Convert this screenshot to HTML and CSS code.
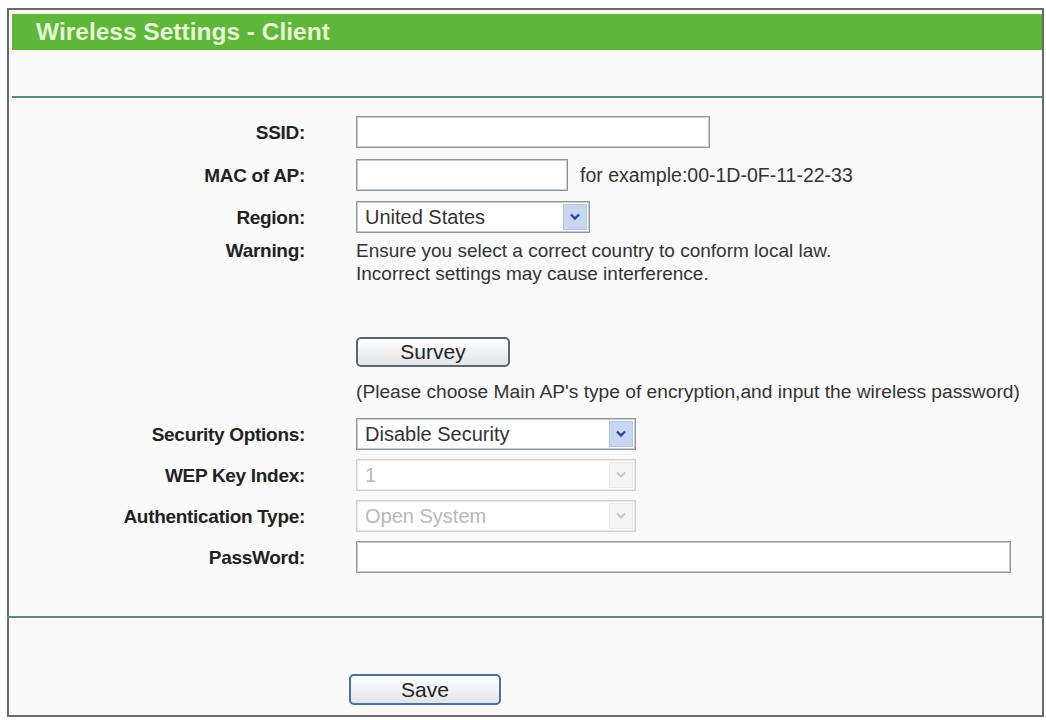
FILE: index.html
```html
<!DOCTYPE html>
<html lang="en">
<head>
<meta charset="utf-8">
<title>Wireless Settings - Client</title>
<link rel="stylesheet" href="styles.css">
</head>
<body>
<div class="frame">
  <div class="header">Wireless Settings - Client</div>
  <div class="rule"></div>
  <form class="form">
    <div class="row r-ssid">
      <label class="lbl">SSID:</label>
      <div class="field"><input class="input w-ssid" type="text"></div>
    </div>
    <div class="row r-mac">
      <label class="lbl">MAC of AP:</label>
      <div class="field"><input class="input w-mac" type="text"><span class="hint">for example:00-1D-0F-11-22-33</span></div>
    </div>
    <div class="row r-region">
      <label class="lbl">Region:</label>
      <div class="field">
        <div class="select w-region">
          <span class="val">United States</span>
          <span class="arrow"><svg width="12" height="8" viewBox="0 0 12 8"><path d="M2 1.5 L6 5.5 L10 1.5" fill="none" stroke="#2b4a8c" stroke-width="2.4"/></svg></span>
        </div>
      </div>
    </div>
    <div class="row r-warning">
      <label class="lbl">Warning:</label>
      <div class="field text">Ensure you select a correct country to conform local law.<br>Incorrect settings may cause interference.</div>
    </div>
    <div class="row r-survey">
      <span class="lbl"></span>
      <div class="field"><button type="button" class="btn btn-survey">Survey</button></div>
    </div>
    <div class="row r-note">
      <span class="lbl"></span>
      <div class="field text">(Please choose Main AP's type of encryption,and input the wireless password)</div>
    </div>
    <div class="row r-sec">
      <label class="lbl">Security Options:</label>
      <div class="field">
        <div class="select w-sec">
          <span class="val">Disable Security</span>
          <span class="arrow"><svg width="12" height="8" viewBox="0 0 12 8"><path d="M2 1.5 L6 5.5 L10 1.5" fill="none" stroke="#2b4a8c" stroke-width="2.4"/></svg></span>
        </div>
      </div>
    </div>
    <div class="row r-small">
      <label class="lbl">WEP Key Index:</label>
      <div class="field">
        <div class="select w-sec disabled">
          <span class="val">1</span>
          <span class="arrow"><svg width="12" height="8" viewBox="0 0 12 8"><path d="M2 1.5 L6 5.5 L10 1.5" fill="none" stroke="#c4c8cc" stroke-width="2"/></svg></span>
        </div>
      </div>
    </div>
    <div class="row r-small">
      <label class="lbl">Authentication Type:</label>
      <div class="field">
        <div class="select w-sec disabled">
          <span class="val">Open System</span>
          <span class="arrow"><svg width="12" height="8" viewBox="0 0 12 8"><path d="M2 1.5 L6 5.5 L10 1.5" fill="none" stroke="#c4c8cc" stroke-width="2"/></svg></span>
        </div>
      </div>
    </div>
    <div class="row r-small">
      <label class="lbl">PassWord:</label>
      <div class="field"><input class="input w-pw" type="text"></div>
    </div>
    <div class="rule rule-bottom"></div>
    <div class="save-row"><button type="button" class="btn btn-save">Save</button></div>
  </form>
</div>
</body>
</html>
```
FILE: styles.css
```css
* { box-sizing: border-box; }
html, body { margin: 0; padding: 0; background: #ffffff; }
body { font-family: "Liberation Sans", Arial, sans-serif; color: #333; }

.frame {
  margin: 8px 0 0 7px;
  width: 1037px;
  border: 2px solid #6a6a6a;
  background: #fafafa;
  padding: 4px 0 10px 3px;
}

.header {
  height: 36px;
  line-height: 36px;
  background: #5eb739;
  color: #e6f5d6;
  font-size: 24.5px;
  font-weight: bold;
  padding-left: 24px;
}

.rule {
  height: 2px;
  background: #568f80;
  margin-top: 46px;
}
.rule-bottom { margin-top: 43px; margin-left: -5px; }

.form { display: block; margin: 0; }

.row {
  display: grid;
  grid-template-columns: 293px 1fr;
  column-gap: 51px;
  align-items: center;
  height: 32px;
}
.r-ssid { margin-top: 18px; }
.r-mac { margin-top: 11px; }
.r-region { margin-top: 10px; }
.r-warning { margin-top: 6px; height: 46px; align-items: start; }
.r-survey { margin-top: 52px; height: 30px; }
.r-note { margin-top: 14px; height: 22px; }
.r-sec { margin-top: 15px; }
.r-small { margin-top: 9px; }

.lbl {
  text-align: right;
  font-size: 19px;
  font-weight: bold;
  color: #222;
  letter-spacing: -0.3px;
  line-height: 23px;
}

.field { display: flex; align-items: center; height: 100%; }
.text {
  display: block;
  font-size: 19px;
  line-height: 23px;
  color: #333;
  white-space: nowrap;
}
.r-note .text { line-height: 22px; font-size: 19.2px; }

.input {
  height: 32px;
  border: 1px solid #8f969c;
  box-shadow: inset 0 0 0 1px #c9cdd1;
  background: #fff;
  padding: 0 6px;
  font: 19px "Liberation Sans", Arial, sans-serif;
  outline: none;
}
.w-ssid { width: 354px; }
.w-mac { width: 212px; }
.w-pw { width: 655px; }

.hint { margin-left: 12px; font-size: 19.5px; color: #333; }

.select {
  height: 32px;
  display: flex;
  align-items: stretch;
  border: 1px solid #8f969c;
  box-shadow: inset 0 0 0 1px #c9cdd1;
  background: #fff;
  padding: 2px;
}
.w-region { width: 234px; }
.w-sec { width: 280px; }
.select .val {
  flex: 1;
  display: flex;
  align-items: center;
  padding-left: 6px;
  font-size: 20px;
  color: #333;
}
.select .arrow {
  width: 24px;
  display: flex;
  align-items: center;
  justify-content: center;
  background: #c8d6f1;
  border: 1px solid #b3c4e6;
}
.select.disabled {
  border-color: #cfd3d6;
  box-shadow: inset 0 0 0 1px #e6e8ea;
}
.select.disabled .val { color: #b8b8b8; }
.select.disabled .arrow { background: #f4f4f4; border-color: #e8e8e8; }

.btn {
  font-family: "Liberation Sans", Arial, sans-serif;
  font-size: 21px;
  color: #222;
  border-radius: 5px;
  background: linear-gradient(#ffffff, #eef0f2 55%, #e2e5e8);
  cursor: pointer;
  padding: 0;
}
.btn-survey {
  width: 154px;
  height: 30px;
  border: 2px solid #5c6670;
}
.save-row { margin-top: 56px; padding-left: 337px; }
.btn-save {
  width: 152px;
  height: 31px;
  border: 2px solid #4d6f9e;
}
```
